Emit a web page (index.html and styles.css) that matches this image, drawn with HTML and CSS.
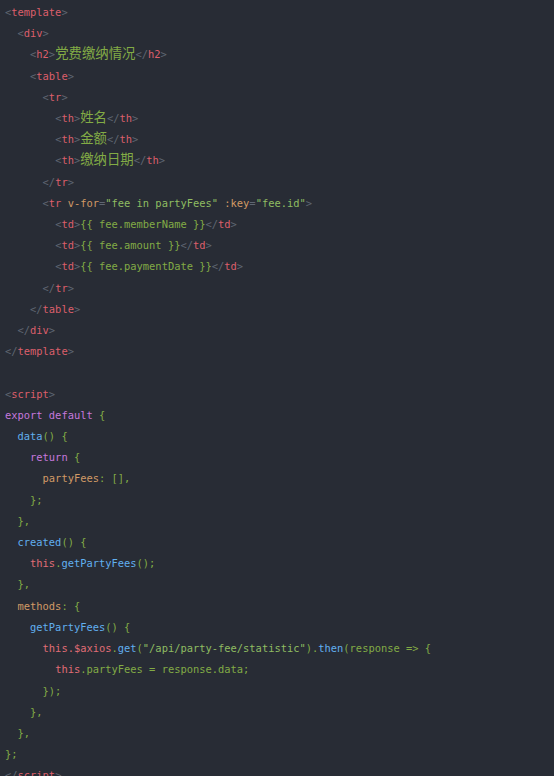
FILE: index.html
```html
<!DOCTYPE html>
<html lang="zh">
<head>
<meta charset="utf-8">
<title>code</title>
<link rel="stylesheet" href="styles.css">
</head>
<body>
<pre class="code"><span class="b">&lt;</span><span class="t">template</span><span class="b">&gt;</span>
  <span class="b">&lt;</span><span class="t">div</span><span class="b">&gt;</span>
    <span class="b">&lt;</span><span class="t">h2</span><span class="b">&gt;</span><span class="c">党费缴纳情况</span><span class="b">&lt;/</span><span class="t">h2</span><span class="b">&gt;</span>
    <span class="b">&lt;</span><span class="t">table</span><span class="b">&gt;</span>
      <span class="b">&lt;</span><span class="t">tr</span><span class="b">&gt;</span>
        <span class="b">&lt;</span><span class="t">th</span><span class="b">&gt;</span><span class="c">姓名</span><span class="b">&lt;/</span><span class="t">th</span><span class="b">&gt;</span>
        <span class="b">&lt;</span><span class="t">th</span><span class="b">&gt;</span><span class="c">金额</span><span class="b">&lt;/</span><span class="t">th</span><span class="b">&gt;</span>
        <span class="b">&lt;</span><span class="t">th</span><span class="b">&gt;</span><span class="c">缴纳日期</span><span class="b">&lt;/</span><span class="t">th</span><span class="b">&gt;</span>
      <span class="b">&lt;/</span><span class="t">tr</span><span class="b">&gt;</span>
      <span class="b">&lt;</span><span class="t">tr</span> <span class="a">v-for</span><span class="b">=</span><span class="s">"fee in partyFees"</span> <span class="a">:key</span><span class="b">=</span><span class="s">"fee.id"</span><span class="b">&gt;</span>
        <span class="b">&lt;</span><span class="t">td</span><span class="b">&gt;</span><span class="x">{{ fee.memberName }}</span><span class="b">&lt;/</span><span class="t">td</span><span class="b">&gt;</span>
        <span class="b">&lt;</span><span class="t">td</span><span class="b">&gt;</span><span class="x">{{ fee.amount }}</span><span class="b">&lt;/</span><span class="t">td</span><span class="b">&gt;</span>
        <span class="b">&lt;</span><span class="t">td</span><span class="b">&gt;</span><span class="x">{{ fee.paymentDate }}</span><span class="b">&lt;/</span><span class="t">td</span><span class="b">&gt;</span>
      <span class="b">&lt;/</span><span class="t">tr</span><span class="b">&gt;</span>
    <span class="b">&lt;/</span><span class="t">table</span><span class="b">&gt;</span>
  <span class="b">&lt;/</span><span class="t">div</span><span class="b">&gt;</span>
<span class="b">&lt;/</span><span class="t">template</span><span class="b">&gt;</span>

<span class="b">&lt;</span><span class="t">script</span><span class="b">&gt;</span>
<span class="k">export</span> <span class="k">default</span> {
  <span class="f">data</span>() {
    <span class="k">return</span> {
      <span class="a">partyFees</span>: [],
    };
  },
  <span class="f">created</span>() {
    <span class="r">this</span>.<span class="f">getPartyFees</span>();
  },
  <span class="a">methods</span>: {
    <span class="f">getPartyFees</span>() {
      <span class="r">this</span><span class="r">.$axios</span>.<span class="f">get</span>(<span class="s">"/api/party-fee/statistic"</span>).<span class="f">then</span>(response =&gt; {
        <span class="r">this</span>.partyFees = response.data;
      });
    },
  },
};
<span class="b">&lt;/</span><span class="t">script</span><span class="b">&gt;</span></pre>
</body>
</html>
```

FILE: styles.css
```css
html, body {
  margin: 0;
  padding: 0;
  background: #282c35;
}

.code {
  margin: 0;
  padding: 2px 0 0 5px;
  font-family: "DejaVu Sans Mono", "Liberation Mono", "Noto Sans CJK SC", monospace;
  font-size: 10.42px;
  line-height: 21.2px;
  color: #82ab45;
  white-space: pre;
}

.b { color: #5f6672; }
.t { color: #dc5f6b; }
.a { color: #d19a66; }
.s { color: #8fbd62; }
.x { color: #82ab45; }
.k { color: #c678dd; }
.f { color: #61afef; }
.r { color: #e06c75; }
.c {
  color: #82ab45;
  font-family: "Noto Sans CJK SC", sans-serif;
  font-size: 13.4px;
  line-height: 0;
}
```
